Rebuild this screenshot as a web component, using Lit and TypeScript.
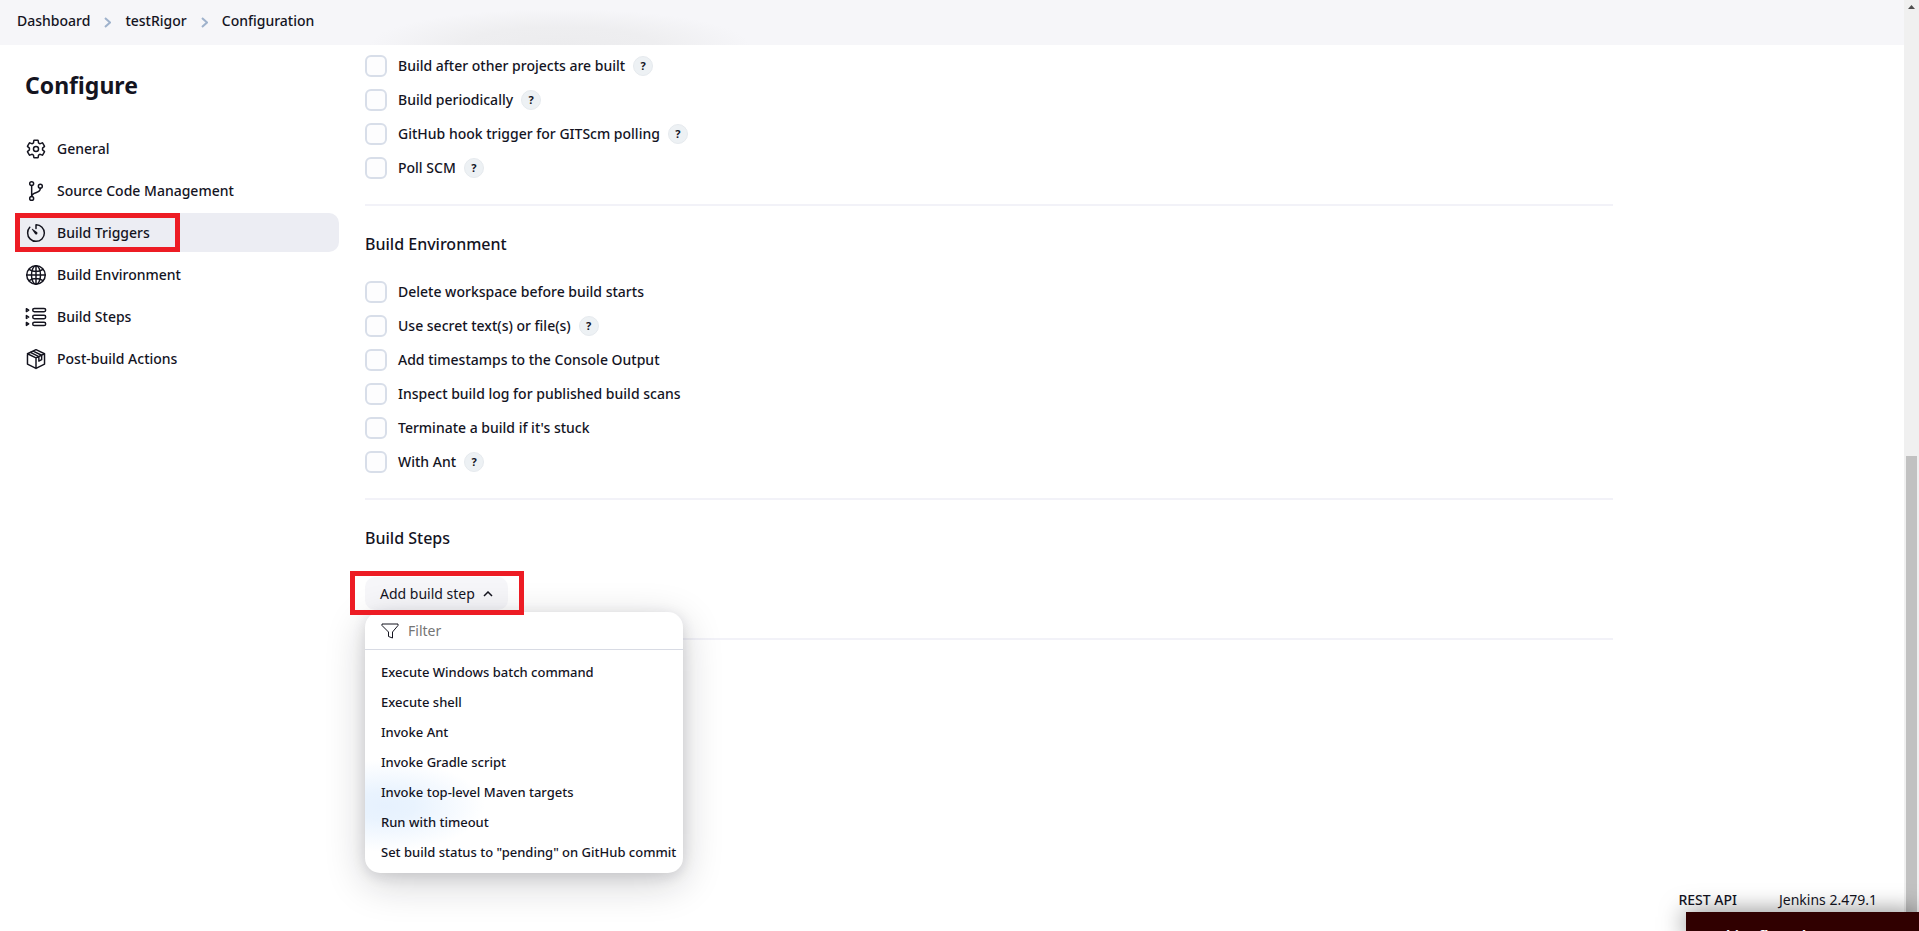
import { LitElement, html, svg, css, nothing } from "lit";
import { customElement, property, state } from "lit/decorators.js";

interface NavItem { id: string; label: string; }
interface Option { label: string; help?: boolean; }

const NAV: NavItem[] = [
  { id: "general", label: "General" },
  { id: "scm", label: "Source Code Management" },
  { id: "triggers", label: "Build Triggers" },
  { id: "environment", label: "Build Environment" },
  { id: "steps", label: "Build Steps" },
  { id: "post", label: "Post-build Actions" },
];

const TRIGGERS: Option[] = [
  { label: "Build after other projects are built", help: true },
  { label: "Build periodically", help: true },
  { label: "GitHub hook trigger for GITScm polling", help: true },
  { label: "Poll SCM", help: true },
];

const ENVIRONMENT: Option[] = [
  { label: "Delete workspace before build starts" },
  { label: "Use secret text(s) or file(s)", help: true },
  { label: "Add timestamps to the Console Output" },
  { label: "Inspect build log for published build scans" },
  { label: "Terminate a build if it's stuck" },
  { label: "With Ant", help: true },
];

const STEPS = [
  "Execute Windows batch command",
  "Execute shell",
  "Invoke Ant",
  "Invoke Gradle script",
  "Invoke top-level Maven targets",
  "Run with timeout",
  'Set build status to "pending" on GitHub commit',
];

const ICONS: Record<string, unknown> = {
  general: svg`
    <circle cx="256" cy="256" r="62"/>
    <path d="M416.4 256a154 154 0 0 1-1.5 20.8l45.2 35.5a10.8 10.8 0 0 1 2.4 13.7l-42.8 74a10.8 10.8 0 0 1-13.1 4.6l-44.9-18.1a16 16 0 0 0-15.2 1.8A164 164 0 0 1 325 400.8a16 16 0 0 0-8.8 12.1l-6.7 47.9a11 11 0 0 1-10.7 9.2h-85.6a11 11 0 0 1-10.7-8.9l-6.7-47.8a16 16 0 0 0-9-12.2 155 155 0 0 1-21.5-12.6 16 16 0 0 0-15.1-1.7l-44.9 18.1a10.8 10.8 0 0 1-13.1-4.6l-42.8-74a10.8 10.8 0 0 1 2.5-13.8l38.2-30a16 16 0 0 0 6-14c-.4-4.2-.6-8.3-.6-12.5s.2-8.3.6-12.4a16 16 0 0 0-6.1-13.9l-38.2-30A10.8 10.8 0 0 1 49.500 186l42.8-74a10.8 10.8 0 0 1 13.1-4.6l44.9 18.1a16 16 0 0 0 15.2-1.8A164 164 0 0 1 187 111.2a16 16 0 0 0 8.8-12.1l6.7-47.9A11 11 0 0 1 213.2 42h85.6a11 11 0 0 1 10.7 8.9l6.7 47.8a16 16 0 0 0 9 12.2 155 155 0 0 1 21.5 12.6 16 16 0 0 0 15.1 1.7l44.9-18.1a10.8 10.8 0 0 1 13.1 4.6l42.8 74a10.8 10.8 0 0 1-2.5 13.8l-38.2 30a16 16 0 0 0-6 14c.3 4.2.5 8.3.5 12.5z"/>`,
  scm: svg`
    <circle cx="150" cy="76" r="48"/><circle cx="150" cy="436" r="48"/><circle cx="362" cy="140" r="48"/>
    <path d="M150 388V124M362 188c0 150-202 70-208 196"/>`,
  triggers: svg`
    <path d="M104 118A205 205 0 0 0 52 254c-1 114 91 206 204 206s204-91 204-204c0-111-89-202-199-204a5 5 0 0 0-5 5v92"/>
    <path class="solid" d="M233 279l-79-113a8 8 0 0 1 11-11l113 79a32 32 0 0 1-37 53 33 33 0 0 1-8-8z"/>`,
  environment: svg`
    <circle cx="256" cy="256" r="226"/><ellipse cx="256" cy="256" rx="110" ry="226"/>
    <path d="M256 30v452M30 256h452M86 118c48 32 108 50 170 50s122-18 170-50M86 394c48-32 108-50 170-50s122 18 170 50"/>`,
  steps: svg`
    <rect x="176" y="48" width="316" height="80" rx="40"/><rect x="176" y="216" width="316" height="80" rx="40"/><rect x="176" y="384" width="316" height="80" rx="40"/>
    <path d="M22 52l56 36-56 36zM22 220l56 36-56 36zM22 388l56 36-56 36z"/>`,
  post: svg`
    <path d="M256 28L464 128v252L256 486 48 380V128zM48 128l208 102 208-102M256 230v256M118 94l208 102M186 62l208 102M326 196v112l68-36V164"/>`,
};

@customElement("symbol-icon")
export class SymbolIcon extends LitElement {
  static styles = css`
    :host { display: block; width: 20px; height: 20px; }
    .icon { display: block; width: 100%; height: 100%; fill: none; stroke: currentColor; stroke-width: 36; stroke-linejoin: round; stroke-linecap: round; overflow: visible; }
    .icon .solid { fill: currentColor; stroke: none; }
  `;
  @property() name = "";
  render() {
    return html`<svg class="icon" viewBox="12 12 488 488" aria-hidden="true">${ICONS[this.name]}</svg>`;
  }
}

@customElement("option-list")
export class OptionList extends LitElement {
  static styles = css`
    :host { display: block; }
    .list { display: grid; gap: 12px; }
    .row { display: flex; align-items: center; gap: 8px; height: 22px; }
    .option { display: flex; align-items: center; gap: 11px; font-weight: 500; line-height: 22px; }
    .box { appearance: none; box-sizing: border-box; width: 22px; height: 22px; margin: 0; border: 2px solid #d8dee9; border-radius: 6px; background: #fdfdfe; }
    .box:checked { background: #0b6aa2; border-color: #0b6aa2; }
    .help { width: 20px; height: 20px; padding: 0; border: 1px solid #e6eaee; border-radius: 50%; background: #edf1f4; color: #14141f; font: 700 11px/18px "Noto Sans", sans-serif; text-align: center; }
  `;
  @property({ attribute: false }) options: Option[] = [];
  render() {
    return html`<div class="list">${this.options.map((o) => html`
      <div class="row">
        <label class="option"><input class="box" type="checkbox">${o.label}</label>
        ${o.help ? html`<button class="help" type="button" aria-label="Help for ${o.label}">?</button>` : nothing}
      </div>`)}</div>`;
  }
}

@customElement("app-root")
export class AppRoot extends LitElement {
  static styles = css`
    :host { display: grid; grid-template-columns: minmax(0, 1fr) 15px; height: 100vh; overflow: hidden; position: relative; background: #fff; color: #14141f; font: 400 14px/20px "Noto Sans", "Open Sans", sans-serif; }
    a { color: inherit; text-decoration: none; }
    button { font-family: inherit; cursor: pointer; }

    .page { display: flex; flex-direction: column; min-width: 0; }
    .crumbs { display: flex; align-items: center; gap: 14px; box-sizing: border-box; height: 45px; padding: 0 17px 3px; font-weight: 500;
      background: radial-gradient(ellipse 190px 36px at 560px 45px, #ececee 0, #eeeef0 50%, #f6f6f9 100%) #f6f6f9; }
    .chevron { width: 7px; height: 11px; margin-top: 3px; fill: none; stroke: #9fb2cc; stroke-width: 2; }

    .body { display: grid; grid-template-columns: 324px minmax(0, 1248px); column-gap: 26px; padding: 0 15px; }
    .side { padding-top: 24px; }
    .title { margin: 0; padding-left: 10px; font-size: 23px; line-height: 32px; font-weight: 700; }
    .nav { display: grid; gap: 3px; margin-top: 28px; }
    .link { position: relative; display: flex; align-items: center; gap: 11px; height: 39px; padding-left: 11px; border-radius: 10px; font-weight: 500; }
    .link.active { background: #ecedf3; }
    .mark { position: absolute; box-sizing: border-box; border: 5px solid #ed1c24; pointer-events: none; z-index: 2; }
    .link .mark { inset: 0 auto 0 0; width: 165px; }

    .main { padding-top: 10px; }
    .section { border-bottom: 2px solid #f2f2f8; padding-bottom: 25px; }
    .section + .section { padding-top: 26px; }
    .heading { margin: 0 0 25px; font-size: 16px; line-height: 24px; font-weight: 500; }
    .adder { position: relative; width: max-content; margin: 27px 0 3px; }
    .add { display: flex; align-items: center; gap: 8px; height: 33px; padding: 0 15px; border: 0; border-radius: 10px; background: #f6f6f9; color: inherit; font-size: 14px; line-height: 20px; }
    .caret { width: 10px; height: 6px; fill: none; stroke: currentColor; stroke-width: 1.5; }
    .adder .mark { inset: -6px -16px -5px -15px; }

    .menu { position: absolute; top: calc(100% + 2px); left: 0; z-index: 1; width: 318px; border-radius: 15px; box-shadow: 0 10px 40px rgba(20, 20, 31, 0.2), 0 3px 14px rgba(20, 20, 31, 0.12);
      background: radial-gradient(ellipse 100px 46px at 20px 194px, #e6f1fe 0, #e9f3fe 30%, #fff 100%) #fff; }
    .filter { display: flex; align-items: center; gap: 9px; height: 37px; padding: 0 16px; border-bottom: 1px solid #d8dbe4; }
    .funnel { width: 18px; height: 16px; fill: none; stroke: currentColor; stroke-width: 1; stroke-linejoin: round; }
    .query { flex: 1; min-width: 0; padding: 0; border: 0; outline: 0; background: none; color: inherit; font: inherit; }
    .query::placeholder { color: #757575; opacity: 1; }
    .items { padding: 7px 0 6px; }
    .item { display: block; width: 100%; height: 30px; padding: 0 0 0 16px; border: 0; background: none; color: inherit; text-align: left; white-space: nowrap; font-size: 13px; line-height: 20px; font-weight: 500; }

    .footer { display: flex; justify-content: flex-end; gap: 42px; margin-top: auto; padding: 0 27px 21px; }
    .rest { font-weight: 500; }

    .track { display: flex; flex-direction: column; align-items: center; padding: 0 2px; background: #f0f0f0; }
    .up { width: 7px; height: 4px; margin-top: 5px; fill: #505050; }
    .thumb { width: 100%; height: 51%; margin-top: auto; background: #c1c1c1; }

    .toast { position: absolute; right: 0; bottom: 0; z-index: 3; box-sizing: border-box; width: 233px; height: 19px; padding: 14px 18px 0; overflow: hidden; background: #300000; color: #fff; font-size: 14px; line-height: 20px; font-weight: 700; white-space: nowrap; box-shadow: 0 2px 26px rgba(0, 0, 0, 0.6); }
  `;

  @state() private active = "triggers";

  private chevron() {
    return html`<svg class="chevron" viewBox="0 0 7 11" aria-hidden="true"><path d="M1 1l5 4.5-5 4.5"/></svg>`;
  }

  render() {
    return html`
      <div class="page">
        <nav class="crumbs" aria-label="Breadcrumbs">
          <a href="#dashboard">Dashboard</a>${this.chevron()}
          <a href="#job">testRigor</a>${this.chevron()}
          <a href="#configuration">Configuration</a>
        </nav>
        <div class="body">
          <aside class="side">
            <h1 class="title">Configure</h1>
            <nav class="nav" aria-label="Sections">
              ${NAV.map((n) => html`
                <a class="link ${n.id === this.active ? "active" : ""}" href="#${n.id}" @click=${() => (this.active = n.id)}>
                  <symbol-icon .name=${n.id}></symbol-icon>${n.label}
                  ${n.id === "triggers" ? html`<span class="mark"></span>` : nothing}
                </a>`)}
            </nav>
          </aside>
          <main class="main">
            <section class="section"><option-list .options=${TRIGGERS}></option-list></section>
            <section class="section">
              <h2 class="heading">Build Environment</h2>
              <option-list .options=${ENVIRONMENT}></option-list>
            </section>
            <section class="section">
              <h2 class="heading">Build Steps</h2>
              <div class="adder">
                <button class="add" type="button" aria-expanded="true">Add build step
                  <svg class="caret" viewBox="0 0 10 6" aria-hidden="true"><path d="M1 5l4-4 4 4"/></svg>
                </button>
                <div class="menu">
                  <label class="filter">
                    <svg class="funnel" viewBox="0 0 18 16" aria-hidden="true"><path d="M1 1h16v1.5L11.5 9v6l-4-1.5V9L1 2.5z"/></svg>
                    <input class="query" type="text" placeholder="Filter" aria-label="Filter">
                  </label>
                  <div class="items">${STEPS.map((s) => html`<button class="item" type="button">${s}</button>`)}</div>
                </div>
                <span class="mark"></span>
              </div>
            </section>
          </main>
        </div>
        <footer class="footer">
          <a class="rest" href="#api">REST API</a>
          <a href="#about">Jenkins 2.479.1</a>
        </footer>
      </div>
      <div class="track" aria-hidden="true">
        <svg class="up" viewBox="0 0 7 4"><path d="M0 4L3.5 0 7 4z"/></svg>
        <div class="thumb"></div>
      </div>
      <div class="toast" role="status">Jenkins flatted</div>
    `;
  }
}
